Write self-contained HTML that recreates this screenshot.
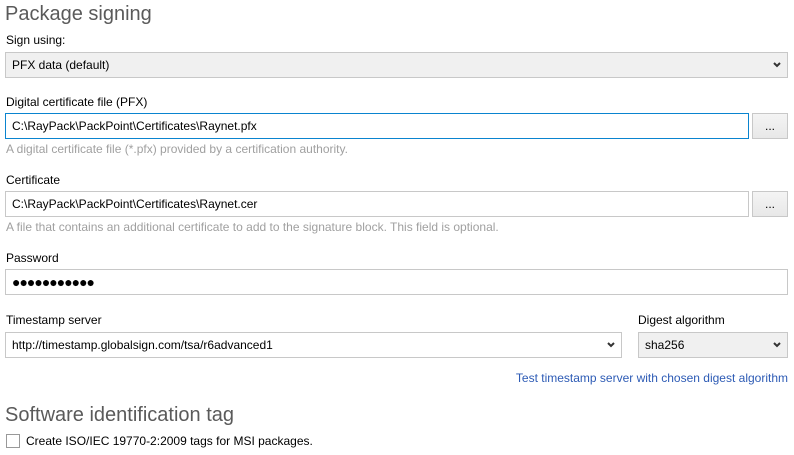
<!DOCTYPE html>
<html><head><style>
body{margin:0;width:794px;height:455px;background:#fff;font-family:"Liberation Sans",sans-serif;font-size:12px;color:#000;position:relative;overflow:hidden}
.a{position:absolute;white-space:nowrap}
.h{font-size:20px;color:#5a5a5a;font-weight:300}
.lbl{font-size:12px}
.box{position:absolute;box-sizing:border-box;border:1px solid #c8c8c8;background:#fff;height:26px;line-height:24px;padding-left:6px;font-size:12px}
.sel{background:#f0f0f0}
.btn{position:absolute;box-sizing:border-box;border:1px solid #c8c8c8;background:linear-gradient(#f4f4f4,#e8e8e8);height:26px;text-align:center;line-height:24px}
.hint{color:#a0a0a0}
.chev{position:absolute;right:6px;top:9px}
</style></head><body>
<div class="a h" style="left:5px;top:3px">Package signing</div>
<div class="a lbl" style="left:6px;top:33px">Sign using:</div>
<div class="box sel" style="left:5px;top:52px;width:783px">PFX data (default)<svg class="chev" width="8" height="6" viewBox="0 0 8 6"><path d="M1 1L4 4L7 1" stroke="#333" stroke-width="2" fill="none"/></svg></div>
<div class="a lbl" style="left:6px;top:95px">Digital certificate file (PFX)</div>
<div class="box" style="left:5px;top:113px;width:744px;border-color:#0a84cf">C:\RayPack\PackPoint\Certificates\Raynet.pfx</div>
<div class="btn" style="left:752px;top:113px;width:36px">...</div>
<div class="a hint" style="left:6px;top:142px">A digital certificate file (*.pfx) provided by a certification authority.</div>
<div class="a lbl" style="left:6px;top:173px">Certificate</div>
<div class="box" style="left:5px;top:191px;width:744px">C:\RayPack\PackPoint\Certificates\Raynet.cer</div>
<div class="btn" style="left:752px;top:191px;width:36px">...</div>
<div class="a hint" style="left:6px;top:220px">A file that contains an additional certificate to add to the signature block. This field is optional.</div>
<div class="a lbl" style="left:6px;top:251px">Password</div>
<div class="box" style="left:5px;top:269px;width:783px;font-size:14px;letter-spacing:-1px">●●●●●●●●●●●</div>
<div class="a lbl" style="left:6px;top:313px">Timestamp server</div>
<div class="box" style="left:5px;top:332px;width:617px">http://timestamp.globalsign.com/tsa/r6advanced1<svg class="chev" width="8" height="6" viewBox="0 0 8 6"><path d="M1 1L4 4L7 1" stroke="#333" stroke-width="2" fill="none"/></svg></div>
<div class="a lbl" style="left:638px;top:313px">Digest algorithm</div>
<div class="box sel" style="left:638px;top:332px;width:150px">sha256<svg class="chev" width="8" height="6" viewBox="0 0 8 6"><path d="M1 1L4 4L7 1" stroke="#333" stroke-width="2" fill="none"/></svg></div>
<div class="a" style="right:6px;top:371px;color:#2d5bb5">Test timestamp server with chosen digest algorithm</div>
<div class="a h" style="left:5px;top:404px">Software identification tag</div>
<div class="a" style="left:6px;top:434px;width:14px;height:14px;box-sizing:border-box;border:1px solid #999;background:#fff"></div>
<div class="a" style="left:26px;top:434px">Create ISO/IEC 19770-2:2009 tags for MSI packages.</div>
</body></html>
